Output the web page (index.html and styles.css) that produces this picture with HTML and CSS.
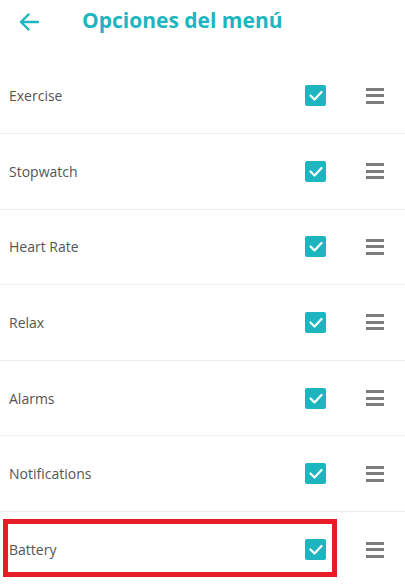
FILE: index.html
```html
<!DOCTYPE html>
<html lang="es">
<head>
    <meta charset="UTF-8">
    <meta name="viewport" content="width=device-width, initial-scale=1.0">
    <title>Opciones del menú</title>
    <link rel="stylesheet" href="styles.css">
</head>
<body>

    <header class="topbar">
        <svg class="back" width="20" height="18" viewBox="0 0 20 18">
            <path d="M19 9H2M9.5 1.5L2 9l7.5 7.5" fill="none" stroke="#1db5bf" stroke-width="2.4" stroke-linecap="round" stroke-linejoin="round"/>
        </svg>
        <h1>Opciones del menú</h1>
    </header>

    <ul class="menu-list">
        <li class="menu-item">
            <span class="label">Exercise</span>
            <span class="check"><svg width="14" height="11" viewBox="0 0 14 11"><path d="M1.5 5.5l4 4 7-7.5" fill="none" stroke="#fff" stroke-width="2.2" stroke-linecap="round" stroke-linejoin="round"/></svg></span>
            <span class="handle"><i></i><i></i><i></i></span>
        </li>
        <li class="menu-item">
            <span class="label">Stopwatch</span>
            <span class="check"><svg width="14" height="11" viewBox="0 0 14 11"><path d="M1.5 5.5l4 4 7-7.5" fill="none" stroke="#fff" stroke-width="2.2" stroke-linecap="round" stroke-linejoin="round"/></svg></span>
            <span class="handle"><i></i><i></i><i></i></span>
        </li>
        <li class="menu-item">
            <span class="label">Heart Rate</span>
            <span class="check"><svg width="14" height="11" viewBox="0 0 14 11"><path d="M1.5 5.5l4 4 7-7.5" fill="none" stroke="#fff" stroke-width="2.2" stroke-linecap="round" stroke-linejoin="round"/></svg></span>
            <span class="handle"><i></i><i></i><i></i></span>
        </li>
        <li class="menu-item">
            <span class="label">Relax</span>
            <span class="check"><svg width="14" height="11" viewBox="0 0 14 11"><path d="M1.5 5.5l4 4 7-7.5" fill="none" stroke="#fff" stroke-width="2.2" stroke-linecap="round" stroke-linejoin="round"/></svg></span>
            <span class="handle"><i></i><i></i><i></i></span>
        </li>
        <li class="menu-item">
            <span class="label">Alarms</span>
            <span class="check"><svg width="14" height="11" viewBox="0 0 14 11"><path d="M1.5 5.5l4 4 7-7.5" fill="none" stroke="#fff" stroke-width="2.2" stroke-linecap="round" stroke-linejoin="round"/></svg></span>
            <span class="handle"><i></i><i></i><i></i></span>
        </li>
        <li class="menu-item">
            <span class="label">Notifications</span>
            <span class="check"><svg width="14" height="11" viewBox="0 0 14 11"><path d="M1.5 5.5l4 4 7-7.5" fill="none" stroke="#fff" stroke-width="2.2" stroke-linecap="round" stroke-linejoin="round"/></svg></span>
            <span class="handle"><i></i><i></i><i></i></span>
        </li>
        <li class="menu-item highlighted">
            <span class="label">Battery</span>
            <span class="check"><svg width="14" height="11" viewBox="0 0 14 11"><path d="M1.5 5.5l4 4 7-7.5" fill="none" stroke="#fff" stroke-width="2.2" stroke-linecap="round" stroke-linejoin="round"/></svg></span>
            <span class="handle"><i></i><i></i><i></i></span>
            <span class="marker"></span>
        </li>
    </ul>

</body>
</html>
```

FILE: styles.css
```css
/* Basic Reset */
* {
    margin: 0;
    padding: 0;
    box-sizing: border-box;
}

body {
    font-family: "Open Sans", Arial, sans-serif;
    background-color: #fff;
    width: 405px;
    height: 587px;
    overflow: hidden;
}

/* Header */
.topbar {
    height: 58.4px;
    display: flex;
    align-items: flex-start;
    padding: 12px 0 0 19px;
}

.back {
    display: block;
    margin-top: 1px;
}

.topbar h1 {
    margin-left: 43px;
    margin-top: -6px;
    font-size: 21px;
    font-weight: 700;
    color: #1db5bf;
}

/* List */
.menu-list {
    list-style: none;
}

.menu-item {
    position: relative;
    height: 75.6px;
    display: flex;
    align-items: center;
    padding-left: 9px;
    border-bottom: 1.5px solid #eeeeee;
}

.menu-item:last-child {
    border-bottom: none;
}

.label {
    flex: 1;
    font-size: 14px;
    color: #555;
}

.check {
    width: 21px;
    height: 21px;
    border-radius: 2px;
    background-color: #1db5bf;
    display: flex;
    align-items: center;
    justify-content: center;
}

.handle {
    width: 18px;
    margin: 0 21px 0 40px;
    display: flex;
    flex-direction: column;
    gap: 3.5px;
}

.handle i {
    display: block;
    height: 3px;
    background-color: #7d7d7d;
}

/* Red annotation box around the last row */
.marker {
    position: absolute;
    left: 3px;
    top: 7.4px;
    width: 334px;
    height: 58px;
    border: 5px solid #e51d24;
}
```
